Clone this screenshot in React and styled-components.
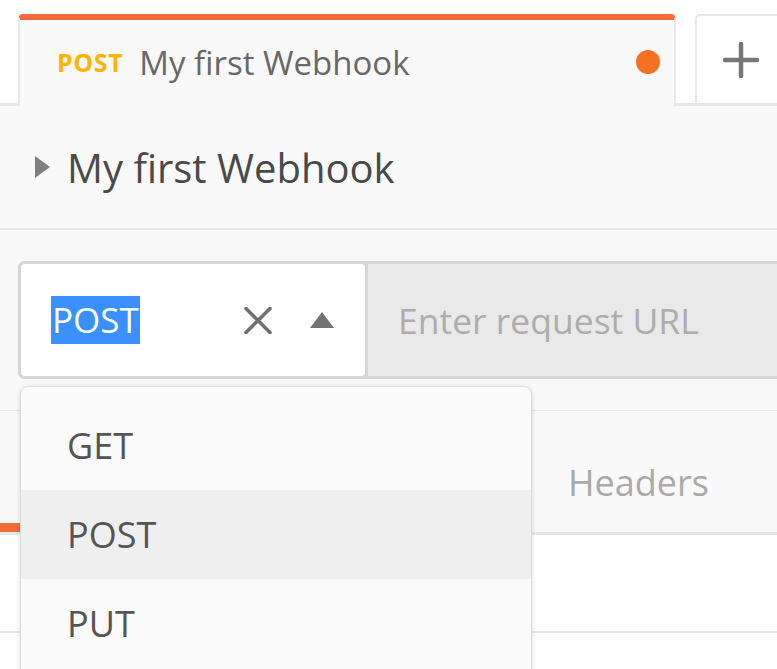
import React from "react";
import styled, { createGlobalStyle } from "styled-components";

const Global = createGlobalStyle`
  html, body { margin: 0; padding: 0; background: #ffffff; }
  body { font-family: "Open Sans", "Noto Sans", sans-serif; overflow: hidden; }
  * { box-sizing: border-box; }
`;

const Page = styled.div`
  position: relative;
  width: 777px;
  height: 669px;
  overflow: hidden;
  background: #ffffff;
`;

const TabBar = styled.div`
  display: flex;
  align-items: flex-end;
  height: 106px;
  padding-left: 18px;
  border-bottom: 3px solid #e7e7e7;
`;

const ActiveTab = styled.div`
  display: flex;
  align-items: center;
  flex-shrink: 0;
  width: 658px;
  height: 92px;
  margin-bottom: -3px;
  padding: 0 14px 2px 37px;
  background: #f9f9f9;
  border: 2px solid #e7e7e7;
  border-top: 6px solid #f26b3a;
  border-bottom: none;
  border-radius: 5px 5px 0 0;
  gap: 16px;
`;

const Method = styled.span`
  font-size: 25px;
  font-weight: 700;
  color: #ffb400;
  letter-spacing: 0.6px;
`;

const TabTitle = styled.span`
  flex: 1;
  font-size: 33px;
  color: #686868;
  white-space: nowrap;
`;

const Dot = styled.span`
  width: 24px;
  height: 24px;
  border-radius: 50%;
  background: #f47023;
`;

const NewTab = styled.div`
  display: flex;
  align-items: center;
  justify-content: center;
  flex-shrink: 0;
  width: 92px;
  height: 89px;
  margin-left: 19px;
  background: #ffffff;
  border: 2px solid #e7e7e7;
  border-bottom: none;
  border-radius: 5px 5px 0 0;
`;

const Header = styled.div`
  display: flex;
  align-items: center;
  gap: 17px;
  height: 124px;
  padding-left: 35px;
  background: #f9f9f9;
  border-bottom: 2px solid #e6e6e6;
`;

const Title = styled.h1`
  margin: 0;
  font-size: 40px;
  font-weight: 400;
  color: #4a4a4a;
  white-space: nowrap;
`;

const RequestArea = styled.div`
  padding: 31px 0 31px 18px;
  background: #f9f9f9;
`;

const UrlBar = styled.div`
  display: flex;
  height: 118px;
  margin-right: -20px;
  border: 3px solid #d6d6d6;
  border-radius: 6px;
  background: #d6d6d6;
  gap: 3px;
`;

const MethodSelect = styled.div`
  display: flex;
  align-items: center;
  width: 344px;
  padding: 0 31px 0 30px;
  background: #ffffff;
  border-radius: 4px;
`;

const Selected = styled.span`
  font-size: 35px;
  line-height: 48px;
  color: #ffffff;
  background: #3990fe;
  padding: 0 1px;
`;

const Spacer = styled.span`
  flex: 1;
`;

const IconSlot = styled.span`
  display: flex;
  align-items: center;
  margin-left: ${(p) => p.$gap || 0}px;
`;

const UrlInput = styled.div`
  flex: 1;
  display: flex;
  align-items: center;
  padding-left: 30px;
  background: #e9e9e9;
  font-size: 35.5px;
  color: #adadad;
  white-space: nowrap;
`;

const TabsRow = styled.div`
  display: flex;
  height: 125px;
  background: #f9f9f9;
  border-top: 1px solid #e8e8e8;
  border-bottom: 3px solid #e6e6e6;
`;

const ReqTab = styled.div`
  display: flex;
  align-items: center;
  flex-shrink: 0;
  width: ${(p) => (p.$width ? `${p.$width}px` : "auto")};
  padding: 30px 42px 0;
  font-size: 36px;
  color: #aaaaaa;
  white-space: nowrap;
  border-bottom: 9px solid ${(p) => (p.$active ? "#f26b3a" : "transparent")};
`;

const BodyRow = styled.div`
  height: 98px;
  background: #ffffff;
  border-bottom: 2px solid #e8e8e8;
`;

const Dropdown = styled.ul`
  position: absolute;
  left: 20px;
  top: 386px;
  width: 512px;
  height: 320px;
  margin: 0;
  padding: 14px 0 0;
  list-style: none;
  background: #fafafa;
  border: 1px solid #dcdcdc;
  border-radius: 8px;
  box-shadow: 0 1px 5px rgba(0, 0, 0, 0.14);
`;

const Option = styled.li`
  display: flex;
  align-items: center;
  height: 89px;
  padding-left: 46px;
  font-size: 36px;
  color: #555555;
  background: ${(p) => (p.$hover ? "#efefef" : "transparent")};
`;

const CaretRight = () => (
  <svg width="15" height="22" viewBox="0 0 15 22">
    <polygon points="0,0 15,11 0,22" fill="#808080" />
  </svg>
);

const Plus = () => (
  <svg width="36" height="36" viewBox="0 0 36 36">
    <path d="M18 2 V34 M2 18 H34" stroke="#777777" strokeWidth="4.5" strokeLinecap="round" />
  </svg>
);

const Cross = () => (
  <svg width="28" height="27" viewBox="0 0 28 27">
    <path d="M2 1.5 L26 25.5 M26 1.5 L2 25.5" stroke="#707070" strokeWidth="3.6" strokeLinecap="round" />
  </svg>
);

const CaretUp = () => (
  <svg width="24" height="16" viewBox="0 0 24 16">
    <polygon points="12,0 24,16 0,16" fill="#737373" />
  </svg>
);

export default function App() {
  return (
    <>
      <Global />
      <Page>
        <TabBar>
          <ActiveTab>
            <Method>POST</Method>
            <TabTitle>My first Webhook</TabTitle>
            <Dot />
          </ActiveTab>
          <NewTab>
            <Plus />
          </NewTab>
        </TabBar>
        <Header>
          <CaretRight />
          <Title>My first Webhook</Title>
        </Header>
        <RequestArea>
          <UrlBar>
            <MethodSelect>
              <Selected>POST</Selected>
              <Spacer />
              <IconSlot>
                <Cross />
              </IconSlot>
              <IconSlot $gap={38}>
                <CaretUp />
              </IconSlot>
            </MethodSelect>
            <UrlInput>Enter request URL</UrlInput>
          </UrlBar>
        </RequestArea>
        <TabsRow>
          <ReqTab $active $width={250} />
          <ReqTab $width={276} />
          <ReqTab>Headers</ReqTab>
        </TabsRow>
        <BodyRow />
        <Dropdown>
          <Option>GET</Option>
          <Option $hover>POST</Option>
          <Option>PUT</Option>
        </Dropdown>
      </Page>
    </>
  );
}
